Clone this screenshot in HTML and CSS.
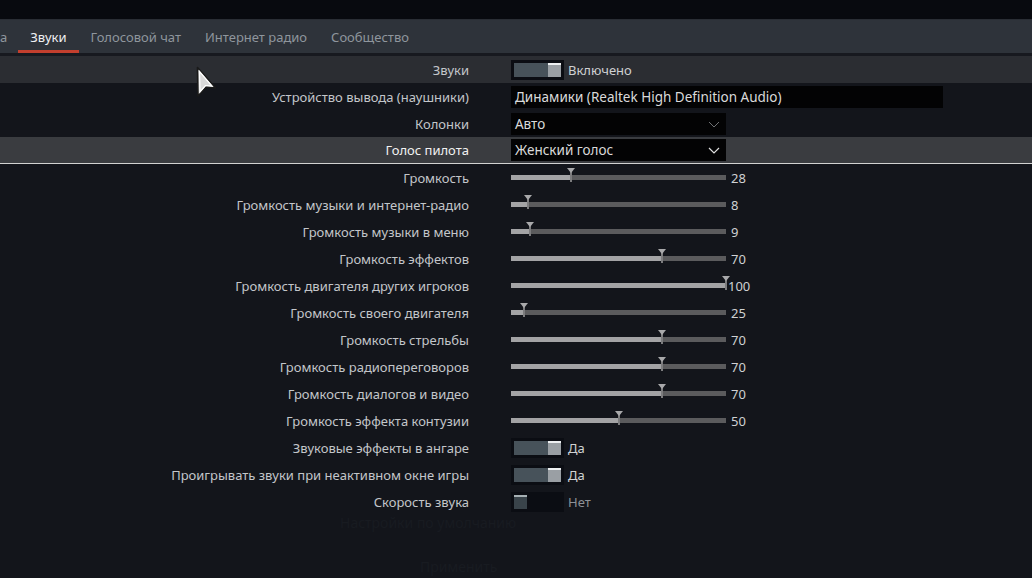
FILE: index.html
```html
<!DOCTYPE html>
<html lang="ru">
<head>
    <meta charset="UTF-8">
    <title>Звуки</title>
    <link rel="stylesheet" href="styles.css">
</head>
<body>
    <div class="topbar"></div>
    <nav class="tabs">
        <span class="tab tab-cut">а</span>
        <span class="tab active">Звуки</span>
        <span class="tab">Голосовой чат</span>
        <span class="tab">Интернет радио</span>
        <span class="tab">Сообщество</span>
    </nav>
    <div class="tabs-shadow"></div>

    <div class="settings">
        <div class="row row-top">
            <div class="label">Звуки</div>
            <div class="control">
                <span class="toggle on"><span class="fill"></span><span class="knob"></span></span>
                <span class="toggle-text">Включено</span>
            </div>
        </div>
        <div class="row">
            <div class="label">Устройство вывода (наушники)</div>
            <div class="control">
                <div class="select select-wide">Динамики (Realtek High Definition Audio)</div>
            </div>
        </div>
        <div class="row">
            <div class="label">Колонки</div>
            <div class="control">
                <div class="select">Авто
                    <svg class="chevron" width="12" height="7" viewBox="0 0 12 7"><path d="M1 1 L6 6 L11 1" fill="none" stroke="#6f7174" stroke-width="1"/></svg>
                </div>
            </div>
        </div>
        <div class="row row-active">
            <div class="label">Голос пилота</div>
            <div class="control">
                <div class="select">Женский голос
                    <svg class="chevron" width="12" height="7" viewBox="0 0 12 7"><path d="M1 1 L6 6 L11 1" fill="none" stroke="#e0e0e0" stroke-width="1.2"/></svg>
                </div>
            </div>
        </div>

        <div class="row">
            <div class="label">Громкость</div>
            <div class="control">
                <div class="slider"><div class="slider-fill" style="width: 28%"></div><div class="thumb" style="left: 28%"></div></div>
                <span class="value">28</span>
            </div>
        </div>
        <div class="row">
            <div class="label">Громкость музыки и интернет-радио</div>
            <div class="control">
                <div class="slider"><div class="slider-fill" style="width: 8%"></div><div class="thumb" style="left: 8%"></div></div>
                <span class="value">8</span>
            </div>
        </div>
        <div class="row">
            <div class="label">Громкость музыки в меню</div>
            <div class="control">
                <div class="slider"><div class="slider-fill" style="width: 9%"></div><div class="thumb" style="left: 9%"></div></div>
                <span class="value">9</span>
            </div>
        </div>
        <div class="row">
            <div class="label">Громкость эффектов</div>
            <div class="control">
                <div class="slider"><div class="slider-fill" style="width: 70%"></div><div class="thumb" style="left: 70%"></div></div>
                <span class="value">70</span>
            </div>
        </div>
        <div class="row">
            <div class="label">Громкость двигателя других игроков</div>
            <div class="control">
                <div class="slider"><div class="slider-fill" style="width: 100%"></div><div class="thumb" style="left: 100%"></div></div>
                <span class="value value-tight">100</span>
            </div>
        </div>
        <div class="row">
            <div class="label">Громкость своего двигателя</div>
            <div class="control">
                <div class="slider"><div class="slider-fill" style="width: 6%"></div><div class="thumb" style="left: 6%"></div></div>
                <span class="value">25</span>
            </div>
        </div>
        <div class="row">
            <div class="label">Громкость стрельбы</div>
            <div class="control">
                <div class="slider"><div class="slider-fill" style="width: 70%"></div><div class="thumb" style="left: 70%"></div></div>
                <span class="value">70</span>
            </div>
        </div>
        <div class="row">
            <div class="label">Громкость радиопереговоров</div>
            <div class="control">
                <div class="slider"><div class="slider-fill" style="width: 70%"></div><div class="thumb" style="left: 70%"></div></div>
                <span class="value">70</span>
            </div>
        </div>
        <div class="row">
            <div class="label">Громкость диалогов и видео</div>
            <div class="control">
                <div class="slider"><div class="slider-fill" style="width: 70%"></div><div class="thumb" style="left: 70%"></div></div>
                <span class="value">70</span>
            </div>
        </div>
        <div class="row">
            <div class="label">Громкость эффекта контузии</div>
            <div class="control">
                <div class="slider"><div class="slider-fill" style="width: 50%"></div><div class="thumb" style="left: 50%"></div></div>
                <span class="value">50</span>
            </div>
        </div>

        <div class="row">
            <div class="label">Звуковые эффекты в ангаре</div>
            <div class="control">
                <span class="toggle on"><span class="fill"></span><span class="knob"></span></span>
                <span class="toggle-text">Да</span>
            </div>
        </div>
        <div class="row">
            <div class="label">Проигрывать звуки при неактивном окне игры</div>
            <div class="control">
                <span class="toggle on"><span class="fill"></span><span class="knob"></span></span>
                <span class="toggle-text">Да</span>
            </div>
        </div>
        <div class="row">
            <div class="label">Скорость звука</div>
            <div class="control">
                <span class="toggle off"><span class="knob"></span></span>
                <span class="toggle-text dim">Нет</span>
            </div>
        </div>
    </div>

    <div class="ghost">
        <div class="ghost-line">Настройки по умолчанию</div>
        <div class="ghost-line short">Применить</div>
    </div>

    <!-- mouse pointer over the page -->
    <svg class="cursor" width="22" height="32" viewBox="0 0 22 32">
        <path d="M1.5 1.5 L19.5 22 L10 21 L2 30 Z" fill="#d9d9d9" stroke="#1a1a1a" stroke-width="1.6" stroke-linejoin="round"/>
        <path d="M3.5 5.5 L16 20 L9.5 19.5 L4 26 Z" fill="none" stroke="#ffffff" stroke-width="1.2"/>
    </svg>
</body>
</html>
```

FILE: styles.css
```css
/* Basic reset */
* {
    box-sizing: border-box;
    margin: 0;
    padding: 0;
}

body {
    font-family: "Noto Sans", "Open Sans", sans-serif;
    font-size: 13px;
    background: #13151b;
    color: #c3c6ca;
    width: 1032px;
    height: 578px;
    overflow: hidden;
    position: relative;
}

/* Tab bar */
.topbar {
    height: 20px;
    background: #080a0f;
    border-bottom: 1px solid #2a2e35;
}

.tabs {
    height: 33px;
    background: #2e333a;
    display: flex;
    align-items: stretch;
}

.tab {
    position: relative;
    padding: 2px 12px 0;
    color: #8f969d;
    line-height: 31px;
    white-space: nowrap;
}

.tab-cut {
    padding-left: 0;
    padding-right: 11px;
}

.tab.active {
    color: #eef0f2;
}

.tab.active::after {
    content: "";
    position: absolute;
    left: 0;
    right: 0;
    bottom: 0;
    height: 3px;
    background: #c33f2e;
}

.tabs-shadow {
    height: 3px;
    background: #17191f;
}

/* Settings rows */
.row {
    display: grid;
    grid-template-columns: 469px 1fr;
    column-gap: 42px;
    align-items: center;
    height: 27px;
}

.row-top {
    background: #2b2d32;
}

.row-active {
    background: #3a3c40;
    border-bottom: 1px solid #d2d2d2;
}

.row-active .label {
    color: #f2f2f2;
}

.label {
    text-align: right;
    white-space: nowrap;
}

.control {
    display: flex;
    align-items: center;
}

/* Dropdowns */
.select {
    position: relative;
    width: 215px;
    height: 22px;
    line-height: 22px;
    padding-left: 4px;
    background: #030304;
    color: #dadada;
    font-size: 13.5px;
}

.select-wide {
    width: 432px;
}

.chevron {
    position: absolute;
    right: 6px;
    top: 8px;
}

/* Sliders */
.slider {
    position: relative;
    width: 215px;
    height: 5px;
    background: #5b5b5d;
}

.slider-fill {
    height: 100%;
    background: #a3a3a5;
}

.thumb {
    position: absolute;
    top: -7px;
    width: 2px;
    height: 14px;
    margin-left: -1px;
    background: #7c7c7e;
}

.thumb::before {
    content: "";
    position: absolute;
    left: -3px;
    top: 0;
    border-left: 4px solid transparent;
    border-right: 4px solid transparent;
    border-top: 5px solid #a9a9ab;
}

.value {
    margin-left: 5px;
    color: #cfd1d3;
}

.value-tight {
    margin-left: 2px;
}

/* Toggles */
.toggle {
    display: flex;
    width: 53px;
    height: 20px;
    padding: 3px;
    background: #0b0d13;
}

.toggle .fill {
    flex: 1;
    background: #47525a;
}

.toggle .knob {
    width: 13px;
    background: #9a9fa4;
    border-top: 2px solid #eef0f2;
}

.toggle.off .knob {
    background: #39434a;
    border-top: 2px solid #a6b0b4;
}

.toggle-text {
    margin-left: 4px;
    color: #cfd1d3;
}

.toggle-text.dim {
    color: #8d9196;
}

/* Faint text below the form, barely visible */
.ghost {
    color: #181b21;
    font-size: 14px;
}

.ghost-line {
    height: 16px;
    line-height: 16px;
    margin-bottom: 28px;
    padding-left: 340px;
}

.ghost-line.short {
    padding-left: 420px;
}

.cursor {
    position: absolute;
    left: 196px;
    top: 66px;
}
```
